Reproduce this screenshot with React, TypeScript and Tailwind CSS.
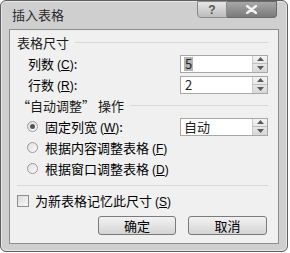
import React from "react";

const cjk = { fontFamily: '"Noto Sans CJK SC", "Noto Sans", sans-serif' };

function Key({ k }: { k: string }) {
  return (
    <span className="text-[12px] ml-[3px]" style={{ fontFamily: '"Liberation Sans", sans-serif' }}>
      (<span className="underline">{k}</span>)
    </span>
  );
}

function Spinner() {
  return (
    <div className="w-[15px] h-full flex flex-col border-l border-[#c8c8c8] bg-gradient-to-b from-[#f4f4f4] to-[#d8d8d8]">
      <div className="flex-1 flex items-center justify-center border-b border-[#bdbdbd]">
        <svg width="7" height="4" viewBox="0 0 7 4"><path d="M0 4 L3.5 0 L7 4 Z" fill="#5a5a5a" /></svg>
      </div>
      <div className="flex-1 flex items-center justify-center">
        <svg width="7" height="4" viewBox="0 0 7 4"><path d="M0 0 L3.5 4 L7 0 Z" fill="#5a5a5a" /></svg>
      </div>
    </div>
  );
}

function Field({ children }: { children: React.ReactNode }) {
  return (
    <div className="w-[88px] h-[18px] flex border border-[#a8a8a8] bg-white">
      <div className="flex-1 flex items-center pl-[3px] text-[13px] text-[#222]">{children}</div>
      <Spinner />
    </div>
  );
}

function Header({ children }: { children: React.ReactNode }) {
  return (
    <div className="h-[21px] flex items-center pl-[7px] pr-[10px]">
      <span className="text-[13px] text-[#1a1a1a] whitespace-nowrap">{children}</span>
      <div className="flex-1 ml-[6px] h-px bg-[#d8d8d8]" />
    </div>
  );
}

function Radio({ on }: { on?: boolean }) {
  return (
    <div className="w-[11px] h-[11px] rounded-full border border-[#9a9a9a] bg-gradient-to-br from-[#e0e0e0] to-[#fafafa] flex items-center justify-center">
      {on && <div className="w-[5px] h-[5px] rounded-full bg-[#555]" />}
    </div>
  );
}

export default function App() {
  return (
    <div className="w-[290px] h-[253px] bg-white" style={cjk}>
      <div className="w-[288px] h-[252px] rounded-[6px] border border-[#5e5e5e] bg-[#cfcfcf] flex flex-col shadow-[inset_0_0_0_1px_#e8e8e8]">
        <div className="h-[28px] flex items-start">
          <div className="pl-[11px] pt-[4px] text-[13px] text-[#2a2a2a] flex-1">插入表格</div>
          <div className="flex mr-[10px]">
            <div className="w-[30px] h-[17px] border border-[#8a8a8a] rounded-bl-[4px] bg-gradient-to-b from-[#e6e6e6] to-[#bcbcbc] flex items-center justify-center text-[12px] font-bold text-[#555]" style={{ fontFamily: '"Liberation Sans", sans-serif' }}>?</div>
            <div className="w-[50px] h-[17px] border border-l-0 border-[#6a6a6a] rounded-br-[4px] bg-gradient-to-b from-[#a8a8a8] to-[#7a7a7a] flex items-center justify-center">
              <svg width="11" height="9" viewBox="0 0 11 9"><path d="M1 1 L10 8 M10 1 L1 8" stroke="#f2f2f2" strokeWidth="2.4" strokeLinecap="round" /></svg>
            </div>
          </div>
        </div>
        <div className="mx-[8px] h-[215px] border border-[#8c8c8c] bg-[#f0f0f0] flex flex-col pt-[2px]">
          <Header>表格尺寸</Header>
          <div className="h-[21px] flex items-center pl-[18px] pr-[10px]">
            <span className="text-[13px] flex-1">列数<Key k="C" />:</span>
            <Field><span className="bg-[#b4b4b4] px-[1px] leading-[14px]">5</span></Field>
          </div>
          <div className="h-[21px] flex items-center pl-[18px] pr-[10px]">
            <span className="text-[13px] flex-1">行数<Key k="R" />:</span>
            <Field><span className="px-[1px]">2</span></Field>
          </div>
          <Header>“自动调整” 操作</Header>
          <div className="h-[21px] flex items-center pl-[17px] pr-[10px]">
            <Radio on />
            <span className="text-[13px] flex-1 ml-[7px]">固定列宽<Key k="W" />:</span>
            <Field>自动</Field>
          </div>
          <div className="h-[21px] flex items-center pl-[17px]">
            <Radio />
            <span className="text-[13px] ml-[7px]">根据内容调整表格<Key k="F" /></span>
          </div>
          <div className="h-[21px] flex items-center pl-[17px]">
            <Radio />
            <span className="text-[13px] ml-[7px]">根据窗口调整表格<Key k="D" /></span>
          </div>
          <div className="mx-[7px] mr-[10px] mt-[6px] h-px bg-[#d8d8d8]" />
          <div className="h-[20px] mt-[5px] flex items-center pl-[7px]">
            <div className="w-[12px] h-[12px] border border-[#8e8e8e] bg-gradient-to-br from-[#dcdcdc] to-[#f8f8f8]" />
            <span className="text-[13px] ml-[6px]">为新表格记忆此尺寸<Key k="S" /></span>
          </div>
          <div className="flex justify-end gap-[12px] pr-[11px] mt-[5px]">
            <div className="w-[78px] h-[19px] rounded-[3px] border border-[#7a7a7a] bg-gradient-to-b from-[#f2f2f2] to-[#d4d4d4] flex items-center justify-center text-[13px]">确定</div>
            <div className="w-[79px] h-[19px] rounded-[3px] border border-[#7a7a7a] bg-gradient-to-b from-[#f2f2f2] to-[#d4d4d4] flex items-center justify-center text-[13px]">取消</div>
          </div>
        </div>
      </div>
    </div>
  );
}
